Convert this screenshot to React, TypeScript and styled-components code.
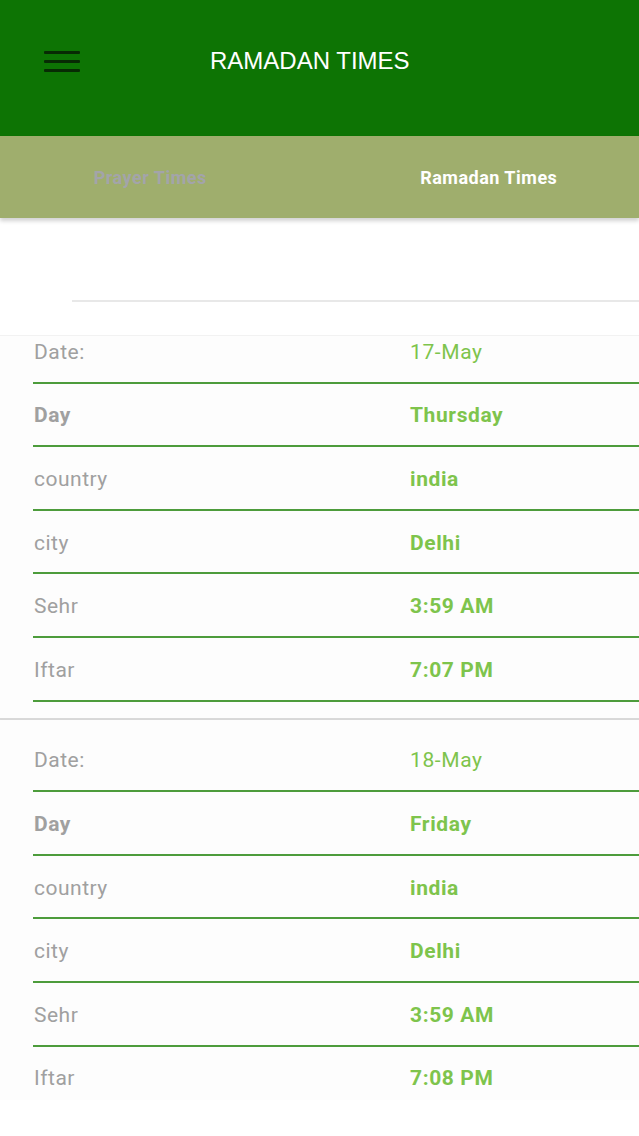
import React, { useLayoutEffect, useRef } from "react";
import styled, { createGlobalStyle } from "styled-components";

const Global = createGlobalStyle`
  html, body { margin: 0; padding: 0; background: #ffffff; }
  body { font-family: Roboto, "Noto Sans", sans-serif; width: 639px; height: 1136px; overflow: hidden; }
`;

const Page = styled.div`
  display: flex;
  flex-direction: column;
  width: 639px;
  height: 1136px;
  background: #ffffff;
`;

const Header = styled.header`
  background: #0d7404;
  height: 136px;
  display: flex;
  flex-direction: column;
`;

const Toolbar = styled.div`
  height: 122px;
  display: flex;
  align-items: center;
  padding-left: 44px;
  gap: 130px;
`;

const MenuButton = styled.div`
  width: 36px;
  height: 21px;
  display: flex;
  flex-direction: column;
  justify-content: space-between;
  span {
    display: block;
    height: 3px;
    background: #072b04;
    border-radius: 1px;
  }
`;

const Title = styled.h1`
  margin: 0;
  font-family: "Liberation Sans", Arial, sans-serif;
  font-weight: 400;
  font-size: 24px;
  color: #ffffff;
`;

const TabBar = styled.nav`
  height: 82px;
  background: #9fae6d;
  display: flex;
  box-shadow: 0 3px 4px rgba(0, 0, 0, 0.18);
  position: relative;
  z-index: 2;
`;

const Tab = styled.div<{ $active?: boolean; $shift: number }>`
  flex: 1;
  display: flex;
  align-items: center;
  justify-content: center;
  padding-left: ${(p) => (p.$shift > 0 ? p.$shift : 0)}px;
  padding-right: ${(p) => (p.$shift < 0 ? -p.$shift : 0)}px;
  font-weight: 700;
  font-size: 18px;
  letter-spacing: 0.5px;
  color: ${(p) => (p.$active ? "#ffffff" : "#a3a4aa")};
`;

const SearchArea = styled.div`
  height: 118px;
  display: flex;
  flex-direction: column;
  justify-content: flex-end;
  padding-left: 72px;
  padding-bottom: 33px;
  box-sizing: border-box;
  border-bottom: 1px solid #f2f2f2;
`;

const SearchLine = styled.div`
  height: 2px;
  background: #e8e8e8;
`;

const List = styled.div`
  height: 764px;
  overflow-y: auto;
  scrollbar-width: none;
  &::-webkit-scrollbar { display: none; }
`;

const Card = styled.section`
  padding: 9px 0 16px 33px;
  border-bottom: 2px solid #d9d9d9;
  box-shadow: 0 1px 2px rgba(0, 0, 0, 0.06);
  background: #fdfdfd;
`;

const Row = styled.div`
  height: 63.6px;
  box-sizing: border-box;
  display: grid;
  grid-template-columns: 376px 1fr;
  align-items: center;
  padding-left: 1px;
  padding-top: 2px;
  border-bottom: 2px solid #4d9c3c;
`;

const Label = styled.span<{ $bold?: boolean }>`
  font-size: 21px;
  letter-spacing: 0.5px;
  color: #a0a0a0;
  font-weight: ${(p) => (p.$bold ? 700 : 400)};
`;

const Value = styled.span<{ $bold?: boolean }>`
  font-size: 21px;
  letter-spacing: 0.6px;
  color: #7ec44c;
  font-weight: ${(p) => (p.$bold ? 700 : 400)};
`;

type Day = { date: string; day: string; country: string; city: string; sehr: string; iftar: string };

const days: Day[] = [
  { date: "17-May", day: "Thursday", country: "india", city: "Delhi", sehr: "3:59 AM", iftar: "7:07 PM" },
  { date: "18-May", day: "Friday", country: "india", city: "Delhi", sehr: "3:59 AM", iftar: "7:08 PM" },
];

function DayCard({ d }: { d: Day }) {
  return (
    <Card>
      <Row><Label>Date:</Label><Value>{d.date}</Value></Row>
      <Row><Label $bold>Day</Label><Value $bold>{d.day}</Value></Row>
      <Row><Label>country</Label><Value $bold>{d.country}</Value></Row>
      <Row><Label>city</Label><Value $bold>{d.city}</Value></Row>
      <Row><Label>Sehr</Label><Value $bold>{d.sehr}</Value></Row>
      <Row><Label>Iftar</Label><Value $bold>{d.iftar}</Value></Row>
    </Card>
  );
}

export default function App() {
  const listRef = useRef<HTMLDivElement>(null);
  useLayoutEffect(() => {
    if (listRef.current) listRef.current.scrollTop = 25;
  }, []);
  return (
    <Page>
      <Global />
      <Header>
        <Toolbar>
          <MenuButton><span /><span /><span /></MenuButton>
          <Title>RAMADAN TIMES</Title>
        </Toolbar>
      </Header>
      <TabBar>
        <Tab $shift={-20}>Prayer Times</Tab>
        <Tab $active $shift={18}>Ramadan Times</Tab>
      </TabBar>
      <SearchArea><SearchLine /></SearchArea>
      <List ref={listRef}>
        {days.map((d) => <DayCard key={d.date} d={d} />)}
      </List>
    </Page>
  );
}
